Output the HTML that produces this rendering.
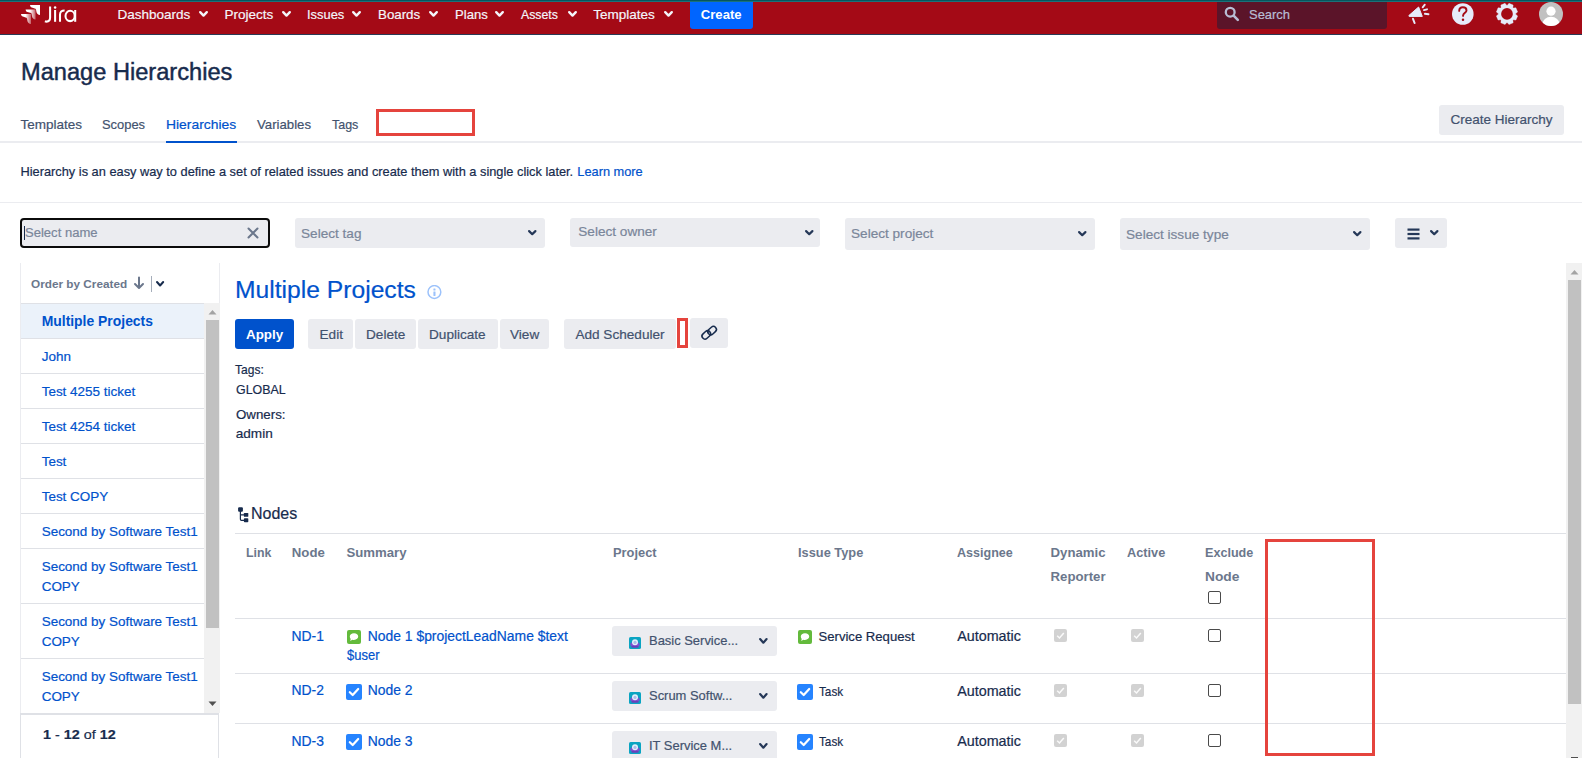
<!DOCTYPE html>
<html><head><meta charset="utf-8"><title>Manage Hierarchies</title>
<style>
html,body{margin:0;padding:0;width:1582px;height:758px;overflow:hidden;background:#fff;font-family:"Liberation Sans",sans-serif;}
.t{position:absolute;white-space:nowrap;-webkit-text-stroke:0.2px currentColor;}
.r{position:absolute;}
</style></head><body>

<div class="r" style="left:0px;top:0px;width:1582px;height:1px;background:#06565e;"></div>
<div class="r" style="left:0px;top:1px;width:1582px;height:1px;background:#1b7179;"></div>
<div class="r" style="left:0px;top:2px;width:1582px;height:32px;background:#a40a16;"></div>
<div class="r" style="left:0px;top:34px;width:1582px;height:1px;background:#2a3a55;"></div>
<svg class="r" style="left:20px;top:4px;" width="22" height="21" viewBox="0 0 22 21"><defs><linearGradient id="lg1" x1="0" y1="0" x2="1" y2="0"><stop offset="0.45" stop-color="#fff"/><stop offset="1" stop-color="#fff" stop-opacity="0.35"/></linearGradient></defs>
<path d="M0 0 H10 V10 C8.2 10 6.6 8.6 6.4 6.8 L6 4.4 C5.8 3.8 5.3 3.6 4.6 3.4 L1.8 2.6 C0.9 2.3 0 1.2 0 0 Z" transform="translate(10,1)" fill="#fff"/>
<path d="M0 0 H10 V10 C8.2 10 6.6 8.6 6.4 6.8 L6 4.4 C5.8 3.8 5.3 3.6 4.6 3.4 L1.8 2.6 C0.9 2.3 0 1.2 0 0 Z" transform="translate(5.6,5.4)" fill="url(#lg1)"/>
<path d="M0 0 H10 V10 C8.2 10 6.6 8.6 6.4 6.8 L6 4.4 C5.8 3.8 5.3 3.6 4.6 3.4 L1.8 2.6 C0.9 2.3 0 1.2 0 0 Z" transform="translate(1,10)" fill="url(#lg1)"/></svg>
<svg class="r" style="left:42px;top:4px;" width="38" height="22" viewBox="0 0 38 22"><g fill="none" stroke="#fff" stroke-width="2.05" stroke-linecap="butt"><path d="M8.1 2.6 V13.6 C8.1 16.4 6.6 17.6 4.6 17.6 C3.9 17.6 3.4 17.5 2.9 17.3"/><path d="M13.1 6 V17.8"/><path d="M18 17.8 V10.8 C18 7.9 19.6 6.4 22.6 6.4"/><path d="M33.2 6 V17.8"/><ellipse cx="28.1" cy="11.95" rx="4.6" ry="5.15"/></g><circle cx="13.1" cy="3.4" r="1.25" fill="#fff"/></svg>
<div class="t" style="left:117.40px;top:7.53px;font-size:13.5px;line-height:13.5px;color:#f4f5fa;font-weight:400;">Dashboards</div>
<svg class="r" style="left:198px;top:10px;" width="11" height="7.5" viewBox="0 0 11 7.5"><path d="M2.20 2.20 L5.50 5.60 L8.80 2.20" fill="none" stroke="#f4f5fa" stroke-width="2.4" stroke-linecap="round" stroke-linejoin="round"/></svg>
<div class="t" style="left:224.50px;top:7.53px;font-size:13.5px;line-height:13.5px;color:#f4f5fa;font-weight:400;">Projects</div>
<svg class="r" style="left:280.7px;top:10px;" width="11" height="7.5" viewBox="0 0 11 7.5"><path d="M2.20 2.20 L5.50 5.60 L8.80 2.20" fill="none" stroke="#f4f5fa" stroke-width="2.4" stroke-linecap="round" stroke-linejoin="round"/></svg>
<div class="t" style="left:307.30px;top:7.53px;font-size:13.5px;line-height:13.5px;color:#f4f5fa;font-weight:400;transform:scaleX(0.955);transform-origin:0 0;">Issues</div>
<svg class="r" style="left:350.8px;top:10px;" width="11" height="7.5" viewBox="0 0 11 7.5"><path d="M2.20 2.20 L5.50 5.60 L8.80 2.20" fill="none" stroke="#f4f5fa" stroke-width="2.4" stroke-linecap="round" stroke-linejoin="round"/></svg>
<div class="t" style="left:378.40px;top:7.53px;font-size:13.5px;line-height:13.5px;color:#f4f5fa;font-weight:400;transform:scaleX(0.986);transform-origin:0 0;">Boards</div>
<svg class="r" style="left:427.7px;top:10px;" width="11" height="7.5" viewBox="0 0 11 7.5"><path d="M2.20 2.20 L5.50 5.60 L8.80 2.20" fill="none" stroke="#f4f5fa" stroke-width="2.4" stroke-linecap="round" stroke-linejoin="round"/></svg>
<div class="t" style="left:454.50px;top:7.53px;font-size:13.5px;line-height:13.5px;color:#f4f5fa;font-weight:400;transform:scaleX(0.970);transform-origin:0 0;">Plans</div>
<svg class="r" style="left:494px;top:10px;" width="11" height="7.5" viewBox="0 0 11 7.5"><path d="M2.20 2.20 L5.50 5.60 L8.80 2.20" fill="none" stroke="#f4f5fa" stroke-width="2.4" stroke-linecap="round" stroke-linejoin="round"/></svg>
<div class="t" style="left:520.50px;top:7.53px;font-size:13.5px;line-height:13.5px;color:#f4f5fa;font-weight:400;transform:scaleX(0.910);transform-origin:0 0;">Assets</div>
<svg class="r" style="left:566.7px;top:10px;" width="11" height="7.5" viewBox="0 0 11 7.5"><path d="M2.20 2.20 L5.50 5.60 L8.80 2.20" fill="none" stroke="#f4f5fa" stroke-width="2.4" stroke-linecap="round" stroke-linejoin="round"/></svg>
<div class="t" style="left:593.30px;top:7.53px;font-size:13.5px;line-height:13.5px;color:#f4f5fa;font-weight:400;">Templates</div>
<svg class="r" style="left:662.5px;top:10px;" width="11" height="7.5" viewBox="0 0 11 7.5"><path d="M2.20 2.20 L5.50 5.60 L8.80 2.20" fill="none" stroke="#f4f5fa" stroke-width="2.4" stroke-linecap="round" stroke-linejoin="round"/></svg>
<div class="r" style="left:690px;top:2px;width:63px;height:27px;background:#0065ff;border-radius:0 0 3px 3px;"></div>
<div class="t" style="left:700.80px;top:7.87px;font-size:13.1px;line-height:13.1px;color:#ffffff;font-weight:700;-webkit-text-stroke:0;">Create</div>
<div class="r" style="left:1217px;top:2px;width:170px;height:27px;background:#5b1429;border-radius:0 0 3px 3px;"></div>
<svg class="r" style="left:1224px;top:6px;" width="16" height="16" viewBox="0 0 16 16"><circle cx="6.2" cy="6.2" r="4.4" fill="none" stroke="#b8bdd4" stroke-width="2.3"/><path d="M9.6 9.6 L13.8 13.8" stroke="#b8bdd4" stroke-width="2.6" stroke-linecap="round"/></svg>
<div class="t" style="left:1249.00px;top:8.79px;font-size:12.95px;line-height:12.95px;color:#b8bdd4;font-weight:400;">Search</div>
<svg class="r" style="left:1402px;top:0px;" width="34" height="28" viewBox="0 0 34 28"><path d="M6.8 15.6 L16.6 7 L20.3 16.4 L7.2 16.4 Z" fill="#e6ebfa" stroke="#e6ebfa" stroke-width="1" stroke-linejoin="round"/>
<path d="M11 18.8 L12.6 23" stroke="#e6ebfa" stroke-width="2" stroke-linecap="round"/>
<path d="M20.7 7.3 L22.8 4.7 M21.9 10.1 L25 9.3 M22.9 13.8 L26.5 14.2" stroke="#e6ebfa" stroke-width="1.9" stroke-linecap="round"/></svg>
<svg class="r" style="left:1451px;top:3px;" width="23" height="23" viewBox="0 0 23 23"><circle cx="11.8" cy="11" r="10.8" fill="#e6ebfa"/><path d="M8.2 7.9 C8.2 5.6 9.9 4.3 11.9 4.3 C14 4.3 15.5 5.7 15.5 7.4 C15.5 9.5 12.5 9.9 12.1 12.3 L12.1 12.9" fill="none" stroke="#a40a16" stroke-width="1.9" stroke-linecap="round"/><circle cx="12" cy="16.8" r="1.25" fill="#a40a16"/></svg>
<svg class="r" style="left:1496px;top:3px;" width="22" height="22" viewBox="0 0 22 22"><path d="M10.62 2.26 L11.38 2.26 L12.97 0.33 L17.12 2.05 L16.88 4.54 L17.41 5.07 L19.90 4.83 L21.62 8.98 L19.69 10.57 L19.69 11.33 L21.62 12.92 L19.90 17.07 L17.41 16.83 L16.88 17.36 L17.12 19.85 L12.97 21.57 L11.38 19.64 L10.62 19.64 L9.03 21.57 L4.88 19.85 L5.12 17.36 L4.59 16.83 L2.10 17.07 L0.38 12.92 L2.31 11.33 L2.31 10.57 L0.38 8.98 L2.10 4.83 L4.59 5.07 L5.12 4.54 L4.88 2.05 L9.03 0.33 Z" fill="#e6ebfa" stroke="#e6ebfa" stroke-width="0.4" stroke-linejoin="round"/><circle cx="11" cy="10.95" r="5.85" fill="#a40a16"/></svg>
<svg class="r" style="left:1539px;top:2px;" width="24" height="24" viewBox="0 0 24 24"><defs><clipPath id="av"><circle cx="12" cy="12" r="12"/></clipPath></defs><circle cx="12" cy="12" r="12" fill="#c1c1c1"/><g clip-path="url(#av)"><circle cx="12" cy="9.2" r="4.6" fill="#fff"/><ellipse cx="12" cy="22" rx="8.6" ry="7.2" fill="#fff"/></g></svg>
<div class="t" style="left:20.50px;top:60.62px;font-size:23.5px;line-height:23.5px;color:#172b4d;font-weight:400;-webkit-text-stroke:0.45px #172b4d;transform:scaleX(1.005);transform-origin:0 0;">Manage Hierarchies</div>
<div class="r" style="left:0px;top:141px;width:1582px;height:2px;background:#ebecf0;"></div>
<div class="t" style="left:20.50px;top:117.53px;font-size:13.5px;line-height:13.5px;color:#42526e;font-weight:400;">Templates</div>
<div class="t" style="left:102.00px;top:117.53px;font-size:13.5px;line-height:13.5px;color:#42526e;font-weight:400;transform:scaleX(0.956);transform-origin:0 0;">Scopes</div>
<div class="t" style="left:165.60px;top:117.53px;font-size:13.5px;line-height:13.5px;color:#0052cc;font-weight:400;transform:scaleX(1.028);transform-origin:0 0;">Hierarchies</div>
<div class="t" style="left:256.60px;top:117.53px;font-size:13.5px;line-height:13.5px;color:#42526e;font-weight:400;transform:scaleX(0.977);transform-origin:0 0;">Variables</div>
<div class="t" style="left:331.90px;top:117.53px;font-size:13.5px;line-height:13.5px;color:#42526e;font-weight:400;transform:scaleX(0.924);transform-origin:0 0;">Tags</div>
<div class="r" style="left:166px;top:141px;width:71px;height:2px;background:#0052cc;"></div>
<div class="r" style="left:376px;top:109px;width:99px;height:27px;background:transparent;border:3px solid #e5443d;box-sizing:border-box;"></div>
<div class="r" style="left:1439px;top:105px;width:125px;height:30px;background:#ebecf0;border-radius:3px;"></div>
<div class="t" style="left:1450.50px;top:113.03px;font-size:13.5px;line-height:13.5px;color:#42526e;font-weight:400;">Create Hierarchy</div>
<div class="t" style="left:20.50px;top:166.42px;font-size:12.8px;line-height:12.8px;color:#172b4d;font-weight:400;">Hierarchy is an easy way to define a set of related issues and create them with a single click later.</div>
<div class="t" style="left:577.30px;top:166.42px;font-size:12.8px;line-height:12.8px;color:#0052cc;font-weight:400;">Learn more</div>
<div class="r" style="left:0px;top:202px;width:1582px;height:1px;background:#ebecf0;"></div>
<div class="r" style="left:20px;top:218px;width:246px;height:26px;background:#ebecf0;border:2px solid #0b0b0b;border-radius:4px;"></div>
<div class="t" style="left:25.00px;top:225.80px;font-size:13.06px;line-height:13.06px;color:#7a869a;font-weight:400;">Select name</div>
<div class="r" style="left:24px;top:226px;width:1px;height:14px;background:#172b4d;"></div>
<svg class="r" style="left:247px;top:227px;" width="12" height="12" viewBox="0 0 12 12"><path d="M1.5 1.5 L10.5 10.5 M10.5 1.5 L1.5 10.5" stroke="#6b778c" stroke-width="2" stroke-linecap="round"/></svg>
<div class="r" style="left:295px;top:218px;width:250px;height:30px;background:#ebecf0;border-radius:3px;"></div>
<div class="t" style="left:301.00px;top:226.64px;font-size:13.6px;line-height:13.6px;color:#7a869a;font-weight:400;">Select tag</div>
<svg class="r" style="left:527.4px;top:229px;" width="10.5" height="7" viewBox="0 0 10.5 7"><path d="M2.10 2.10 L5.25 5.20 L8.40 2.10" fill="none" stroke="#253858" stroke-width="2.2" stroke-linecap="round" stroke-linejoin="round"/></svg>
<div class="r" style="left:570px;top:218px;width:250px;height:29px;background:#ebecf0;border-radius:3px;"></div>
<div class="t" style="left:578.30px;top:224.84px;font-size:13.6px;line-height:13.6px;color:#7a869a;font-weight:400;">Select owner</div>
<svg class="r" style="left:804px;top:228.5px;" width="10.5" height="7" viewBox="0 0 10.5 7"><path d="M2.10 2.10 L5.25 5.20 L8.40 2.10" fill="none" stroke="#253858" stroke-width="2.2" stroke-linecap="round" stroke-linejoin="round"/></svg>
<div class="r" style="left:845px;top:218px;width:250px;height:32px;background:#ebecf0;border-radius:3px;"></div>
<div class="t" style="left:851.00px;top:227.44px;font-size:13.6px;line-height:13.6px;color:#7a869a;font-weight:400;">Select project</div>
<svg class="r" style="left:1077px;top:230px;" width="10.5" height="7" viewBox="0 0 10.5 7"><path d="M2.10 2.10 L5.25 5.20 L8.40 2.10" fill="none" stroke="#253858" stroke-width="2.2" stroke-linecap="round" stroke-linejoin="round"/></svg>
<div class="r" style="left:1120px;top:218px;width:250px;height:32px;background:#ebecf0;border-radius:3px;"></div>
<div class="t" style="left:1126.00px;top:227.64px;font-size:13.6px;line-height:13.6px;color:#7a869a;font-weight:400;">Select issue type</div>
<svg class="r" style="left:1352.4px;top:229.6px;" width="10.5" height="7" viewBox="0 0 10.5 7"><path d="M2.10 2.10 L5.25 5.20 L8.40 2.10" fill="none" stroke="#253858" stroke-width="2.2" stroke-linecap="round" stroke-linejoin="round"/></svg>
<div class="r" style="left:1395px;top:218px;width:52px;height:30px;background:#ebecf0;border-radius:3px;"></div>
<svg class="r" style="left:1407px;top:228px;" width="13" height="12" viewBox="0 0 13 12"><rect x="0.5" y="0.5" width="12" height="2.2" fill="#253858"/><rect x="0.5" y="4.9" width="12" height="2.2" fill="#253858"/><rect x="0.5" y="9.3" width="12" height="2.2" fill="#253858"/></svg>
<svg class="r" style="left:1429.4px;top:229.4px;" width="10.5" height="7" viewBox="0 0 10.5 7"><path d="M2.10 2.10 L5.25 5.20 L8.40 2.10" fill="none" stroke="#253858" stroke-width="2.2" stroke-linecap="round" stroke-linejoin="round"/></svg>
<div class="r" style="left:20px;top:263px;width:1px;height:450px;background:#ebecf0;"></div>
<div class="r" style="left:219px;top:263px;width:1px;height:40px;background:#ebecf0;"></div>
<div class="t" style="left:31.00px;top:278.00px;font-size:11.77px;line-height:11.77px;color:#6b778c;font-weight:700;-webkit-text-stroke:0;">Order by Created</div>
<svg class="r" style="left:133px;top:276px;" width="12" height="14" viewBox="0 0 12 14"><path d="M6 1.5 V11.5 M2 8 L6 12 L10 8" fill="none" stroke="#6b778c" stroke-width="2" stroke-linecap="round" stroke-linejoin="round"/></svg>
<div class="r" style="left:151px;top:276px;width:1px;height:16px;background:#a5adba;"></div>
<svg class="r" style="left:154.6px;top:280.4px;" width="10.2" height="7.2" viewBox="0 0 10.2 7.2"><path d="M2.00 2.00 L5.10 5.50 L8.20 2.00" fill="none" stroke="#172b4d" stroke-width="2.0" stroke-linecap="round" stroke-linejoin="round"/></svg>
<div class="r" style="left:21px;top:303px;width:183px;height:35px;background:#ebf2fa;"></div>
<div class="r" style="left:21px;top:303px;width:183px;height:1px;background:#dfe1e6;"></div>
<div class="t" style="left:41.70px;top:315.18px;font-size:13.91px;line-height:13.91px;color:#0052cc;font-weight:700;-webkit-text-stroke:0;">Multiple Projects</div>
<div class="r" style="left:21px;top:338px;width:183px;height:1px;background:#dfe1e6;"></div>
<div class="t" style="left:41.70px;top:349.56px;font-size:13.46px;line-height:13.46px;color:#0052cc;font-weight:400;">John</div>
<div class="r" style="left:21px;top:373px;width:183px;height:1px;background:#dfe1e6;"></div>
<div class="t" style="left:41.70px;top:384.56px;font-size:13.46px;line-height:13.46px;color:#0052cc;font-weight:400;">Test 4255 ticket</div>
<div class="r" style="left:21px;top:408px;width:183px;height:1px;background:#dfe1e6;"></div>
<div class="t" style="left:41.70px;top:419.56px;font-size:13.46px;line-height:13.46px;color:#0052cc;font-weight:400;">Test 4254 ticket</div>
<div class="r" style="left:21px;top:443px;width:183px;height:1px;background:#dfe1e6;"></div>
<div class="t" style="left:41.70px;top:454.56px;font-size:13.46px;line-height:13.46px;color:#0052cc;font-weight:400;">Test</div>
<div class="r" style="left:21px;top:478px;width:183px;height:1px;background:#dfe1e6;"></div>
<div class="t" style="left:41.70px;top:489.56px;font-size:13.46px;line-height:13.46px;color:#0052cc;font-weight:400;">Test COPY</div>
<div class="r" style="left:21px;top:513px;width:183px;height:1px;background:#dfe1e6;"></div>
<div class="t" style="left:41.70px;top:524.56px;font-size:13.46px;line-height:13.46px;color:#0052cc;font-weight:400;">Second by Software Test1</div>
<div class="r" style="left:21px;top:548px;width:183px;height:1px;background:#dfe1e6;"></div>
<div class="t" style="left:41.70px;top:559.56px;font-size:13.46px;line-height:13.46px;color:#0052cc;font-weight:400;">Second by Software Test1</div>
<div class="t" style="left:41.70px;top:579.56px;font-size:13.46px;line-height:13.46px;color:#0052cc;font-weight:400;">COPY</div>
<div class="r" style="left:21px;top:603px;width:183px;height:1px;background:#dfe1e6;"></div>
<div class="t" style="left:41.70px;top:614.56px;font-size:13.46px;line-height:13.46px;color:#0052cc;font-weight:400;">Second by Software Test1</div>
<div class="t" style="left:41.70px;top:634.56px;font-size:13.46px;line-height:13.46px;color:#0052cc;font-weight:400;">COPY</div>
<div class="r" style="left:21px;top:658px;width:183px;height:1px;background:#dfe1e6;"></div>
<div class="t" style="left:41.70px;top:669.56px;font-size:13.46px;line-height:13.46px;color:#0052cc;font-weight:400;">Second by Software Test1</div>
<div class="t" style="left:41.70px;top:689.56px;font-size:13.46px;line-height:13.46px;color:#0052cc;font-weight:400;">COPY</div>
<div class="r" style="left:204px;top:303px;width:16px;height:410px;background:#f1f1f1;"></div>
<svg class="r" style="left:208px;top:309px;" width="9" height="6" viewBox="0 0 9 6"><path d="M0.5 5.5 L4.5 1 L8.5 5.5 Z" fill="#a3a3a3"/></svg>
<div class="r" style="left:206px;top:320px;width:13px;height:308px;background:#c1c1c1;"></div>
<svg class="r" style="left:208px;top:701px;" width="9" height="6" viewBox="0 0 9 6"><path d="M0.5 0.5 L4.5 5 L8.5 0.5 Z" fill="#505050"/></svg>
<div class="r" style="left:20px;top:713px;width:199px;height:45px;background:#fff;border-top:2px solid #dfe1e6;border-left:1px solid #dfe1e6;border-right:1px solid #dfe1e6;box-sizing:border-box;"></div>
<div class="t" style="left:43.00px;top:727.52px;font-size:13.5px;line-height:13.5px;color:#172b4d;font-weight:400;transform:scaleX(1.063);transform-origin:0 0;"><b>1</b> - <b>12</b> of <b>12</b></div>
<div class="t" style="left:234.60px;top:277.53px;font-size:24.32px;line-height:24.32px;color:#0052cc;font-weight:400;transform:scaleX(1.014);transform-origin:0 0;">Multiple Projects</div>
<svg class="r" style="left:427px;top:285px;" width="15" height="15" viewBox="0 0 15 15"><circle cx="7.4" cy="7" r="6.4" fill="none" stroke="#9cc2fb" stroke-width="1.5"/><rect x="6.4" y="3.6" width="2.1" height="1.9" rx="0.5" fill="#9cc2fb"/><rect x="6.4" y="6.4" width="2.1" height="4.6" rx="0.4" fill="#9cc2fb"/></svg>
<div class="r" style="left:235px;top:319px;width:59px;height:30px;background:#0052cc;border-radius:3px;"></div>
<div class="t" style="left:246.00px;top:328.02px;font-size:13.39px;line-height:13.39px;color:#ffffff;font-weight:700;-webkit-text-stroke:0;">Apply</div>
<div class="r" style="left:308px;top:319px;width:45px;height:30px;background:#ebecf0;border-radius:3px;"></div>
<div class="t" style="left:319.50px;top:328.04px;font-size:13.6px;line-height:13.6px;color:#42526e;font-weight:400;">Edit</div>
<div class="r" style="left:355px;top:319px;width:61px;height:30px;background:#ebecf0;border-radius:3px;"></div>
<div class="t" style="left:366.00px;top:328.04px;font-size:13.6px;line-height:13.6px;color:#42526e;font-weight:400;">Delete</div>
<div class="r" style="left:418px;top:319px;width:80px;height:30px;background:#ebecf0;border-radius:3px;"></div>
<div class="t" style="left:429.00px;top:328.04px;font-size:13.6px;line-height:13.6px;color:#42526e;font-weight:400;">Duplicate</div>
<div class="r" style="left:500px;top:319px;width:49px;height:30px;background:#ebecf0;border-radius:3px;"></div>
<div class="t" style="left:510.00px;top:328.04px;font-size:13.6px;line-height:13.6px;color:#42526e;font-weight:400;">View</div>
<div class="r" style="left:564px;top:319px;width:112px;height:30px;background:#ebecf0;border-radius:3px;"></div>
<div class="t" style="left:575.40px;top:328.04px;font-size:13.6px;line-height:13.6px;color:#42526e;font-weight:400;">Add Scheduler</div>
<div class="r" style="left:677px;top:318px;width:11px;height:30px;background:transparent;border:3px solid #e5443d;box-sizing:border-box;"></div>
<div class="r" style="left:690px;top:318px;width:38px;height:30px;background:#ebecf0;border-radius:3px;"></div>
<svg class="r" style="left:698px;top:322px;" width="24" height="22" viewBox="0 0 24 22"><g fill="none" stroke="#172b4d" stroke-width="1.55"><rect x="-4.7" y="-3" width="9.4" height="6" rx="3" transform="translate(14.1 8.6) rotate(-42)"/><rect x="-4.7" y="-3" width="9.4" height="6" rx="3" transform="translate(8.3 12.9) rotate(-42)"/></g></svg>
<div class="t" style="left:235.20px;top:362.84px;font-size:13.6px;line-height:13.6px;color:#172b4d;font-weight:400;transform:scaleX(0.885);transform-origin:0 0;">Tags:</div>
<div class="t" style="left:235.70px;top:382.54px;font-size:13.6px;line-height:13.6px;color:#172b4d;font-weight:400;transform:scaleX(0.913);transform-origin:0 0;">GLOBAL</div>
<div class="t" style="left:235.70px;top:407.64px;font-size:13.6px;line-height:13.6px;color:#172b4d;font-weight:400;transform:scaleX(0.978);transform-origin:0 0;">Owners:</div>
<div class="t" style="left:235.70px;top:427.34px;font-size:13.6px;line-height:13.6px;color:#172b4d;font-weight:400;">admin</div>
<svg class="r" style="left:237px;top:507px;" width="13" height="17" viewBox="0 0 13 17"><g fill="#172b4d"><rect x="1.1" y="0.3" width="4.8" height="4.5" rx="1"/><rect x="6.9" y="6" width="4.4" height="3.8" rx="0.6"/><rect x="6.9" y="11.2" width="4.4" height="4" rx="0.8"/></g><path d="M3.4 4 V12.3 Q3.4 13.3 4.4 13.3 H7.5 M3.4 7.9 H7.5" fill="none" stroke="#172b4d" stroke-width="1.2"/></svg>
<div class="t" style="left:250.80px;top:505.54px;font-size:15.6px;line-height:15.6px;color:#172b4d;font-weight:400;transform:scaleX(1.025);transform-origin:0 0;">Nodes</div>
<div class="r" style="left:235px;top:533px;width:1331px;height:1px;background:#dfe1e6;"></div>
<div class="r" style="left:235px;top:618px;width:1331px;height:1px;background:#dfe1e6;"></div>
<div class="r" style="left:235px;top:673px;width:1331px;height:1px;background:#dfe1e6;"></div>
<div class="r" style="left:235px;top:723px;width:1331px;height:1px;background:#dfe1e6;"></div>
<div class="t" style="left:245.50px;top:546.47px;font-size:13.21px;line-height:13.21px;color:#6b778c;font-weight:700;-webkit-text-stroke:0;transform:scaleX(0.937);transform-origin:0 0;">Link</div>
<div class="t" style="left:291.80px;top:546.47px;font-size:13.21px;line-height:13.21px;color:#6b778c;font-weight:700;-webkit-text-stroke:0;">Node</div>
<div class="t" style="left:346.40px;top:546.47px;font-size:13.21px;line-height:13.21px;color:#6b778c;font-weight:700;-webkit-text-stroke:0;">Summary</div>
<div class="t" style="left:612.60px;top:546.47px;font-size:13.21px;line-height:13.21px;color:#6b778c;font-weight:700;-webkit-text-stroke:0;transform:scaleX(0.973);transform-origin:0 0;">Project</div>
<div class="t" style="left:797.60px;top:546.47px;font-size:13.21px;line-height:13.21px;color:#6b778c;font-weight:700;-webkit-text-stroke:0;transform:scaleX(0.970);transform-origin:0 0;">Issue Type</div>
<div class="t" style="left:957.00px;top:546.47px;font-size:13.21px;line-height:13.21px;color:#6b778c;font-weight:700;-webkit-text-stroke:0;transform:scaleX(0.950);transform-origin:0 0;">Assignee</div>
<div class="t" style="left:1050.50px;top:546.47px;font-size:13.21px;line-height:13.21px;color:#6b778c;font-weight:700;-webkit-text-stroke:0;">Dynamic</div>
<div class="t" style="left:1127.40px;top:546.47px;font-size:13.21px;line-height:13.21px;color:#6b778c;font-weight:700;-webkit-text-stroke:0;transform:scaleX(0.965);transform-origin:0 0;">Active</div>
<div class="t" style="left:1204.60px;top:546.47px;font-size:13.21px;line-height:13.21px;color:#6b778c;font-weight:700;-webkit-text-stroke:0;transform:scaleX(0.954);transform-origin:0 0;">Exclude</div>
<div class="t" style="left:1050.50px;top:569.97px;font-size:13.21px;line-height:13.21px;color:#6b778c;font-weight:700;-webkit-text-stroke:0;">Reporter</div>
<div class="t" style="left:1204.60px;top:569.97px;font-size:13.21px;line-height:13.21px;color:#6b778c;font-weight:700;-webkit-text-stroke:0;transform:scaleX(1.042);transform-origin:0 0;">Node</div>
<div class="r" style="left:1208px;top:591px;width:13px;height:13px;background:#fff;border:1px solid #4a4a4a;border-radius:2px;box-sizing:border-box;"></div>
<div class="t" style="left:291.50px;top:629.68px;font-size:13.9px;line-height:13.9px;color:#0052cc;font-weight:400;">ND-1</div>
<svg class="r" style="left:347px;top:630px;" width="14" height="14" viewBox="0 0 14 14"><rect x="0" y="0" width="14" height="14" rx="2" fill="#63ba3c"/><path d="M7 3.3 C9.6 3.3 11.2 4.7 11.2 6.6 C11.2 8.5 9.6 9.9 7 9.9 C6.4 9.9 5.9 9.8 5.4 9.7 L3.2 11 L3.7 9 C3.1 8.4 2.8 7.5 2.8 6.6 C2.8 4.7 4.4 3.3 7 3.3 Z" fill="#fff"/></svg>
<svg class="r" style="left:798px;top:630px;" width="14" height="14" viewBox="0 0 14 14"><rect x="0" y="0" width="14" height="14" rx="2" fill="#63ba3c"/><path d="M7 3.3 C9.6 3.3 11.2 4.7 11.2 6.6 C11.2 8.5 9.6 9.9 7 9.9 C6.4 9.9 5.9 9.8 5.4 9.7 L3.2 11 L3.7 9 C3.1 8.4 2.8 7.5 2.8 6.6 C2.8 4.7 4.4 3.3 7 3.3 Z" fill="#fff"/></svg>
<div class="t" style="left:367.70px;top:629.68px;font-size:13.91px;line-height:13.91px;color:#0052cc;font-weight:400;">Node 1 $projectLeadName $text</div>
<div class="t" style="left:347.00px;top:649.18px;font-size:13.91px;line-height:13.91px;color:#0052cc;font-weight:400;transform:scaleX(0.934);transform-origin:0 0;">$user</div>
<div class="r" style="left:612px;top:626px;width:165px;height:30px;background:#ebecf0;border-radius:3px;"></div>
<svg class="r" style="left:629px;top:637px;" width="12" height="12" viewBox="0 0 12 12"><rect width="12" height="12" rx="1.6" fill="#0aa4c2"/><ellipse cx="6" cy="7.6" rx="4.6" ry="2.8" fill="#7d4fd0"/><rect x="2.6" y="9" width="6.8" height="1.6" fill="#6a3fb8"/><circle cx="6" cy="5.2" r="3" fill="#e4eefc"/><circle cx="6" cy="5.4" r="1.6" fill="#a9c0e8"/></svg>
<div class="t" style="left:649.40px;top:634.04px;font-size:13.6px;line-height:13.6px;color:#42526e;font-weight:400;transform:scaleX(0.952);transform-origin:0 0;">Basic Service...</div>
<svg class="r" style="left:758px;top:637px;" width="10.7" height="7.5" viewBox="0 0 10.7 7.5"><path d="M2.10 2.10 L5.35 5.70 L8.60 2.10" fill="none" stroke="#253858" stroke-width="2.2" stroke-linecap="round" stroke-linejoin="round"/></svg>
<div class="t" style="left:818.50px;top:630.36px;font-size:13.11px;line-height:13.11px;color:#172b4d;font-weight:400;">Service Request</div>
<div class="t" style="left:957.20px;top:629.32px;font-size:14.33px;line-height:14.33px;color:#172b4d;font-weight:400;">Automatic</div>
<svg class="r" style="left:1054px;top:629px;" width="13" height="13" viewBox="0 0 13 13"><rect x="0" y="0" width="13" height="13" rx="2" fill="#d2d2d2"/><path d="M3.2 6.8 L5.5 9 L9.8 4" fill="none" stroke="#fafafa" stroke-width="1.5"/></svg>
<svg class="r" style="left:1131px;top:629px;" width="13" height="13" viewBox="0 0 13 13"><rect x="0" y="0" width="13" height="13" rx="2" fill="#d2d2d2"/><path d="M3.2 6.8 L5.5 9 L9.8 4" fill="none" stroke="#fafafa" stroke-width="1.5"/></svg>
<div class="r" style="left:1208px;top:629px;width:13px;height:13px;background:#fff;border:1px solid #4a4a4a;border-radius:2px;box-sizing:border-box;"></div>
<div class="t" style="left:291.50px;top:684.38px;font-size:13.9px;line-height:13.9px;color:#0052cc;font-weight:400;">ND-2</div>
<svg class="r" style="left:346px;top:683.7px;" width="16" height="16" viewBox="0 0 16 16"><rect x="0" y="0" width="16" height="16" rx="2" fill="#2684ff"/><path d="M3.8 8.2 L6.7 11 L12.2 5" fill="none" stroke="#fff" stroke-width="2.2" stroke-linecap="round" stroke-linejoin="round"/></svg>
<svg class="r" style="left:797px;top:683.7px;" width="16" height="16" viewBox="0 0 16 16"><rect x="0" y="0" width="16" height="16" rx="2" fill="#2684ff"/><path d="M3.8 8.2 L6.7 11 L12.2 5" fill="none" stroke="#fff" stroke-width="2.2" stroke-linecap="round" stroke-linejoin="round"/></svg>
<div class="t" style="left:367.70px;top:684.38px;font-size:13.91px;line-height:13.91px;color:#0052cc;font-weight:400;">Node 2</div>
<div class="r" style="left:612px;top:681px;width:165px;height:30px;background:#ebecf0;border-radius:3px;"></div>
<svg class="r" style="left:629px;top:692px;" width="12" height="12" viewBox="0 0 12 12"><rect width="12" height="12" rx="1.6" fill="#0aa4c2"/><ellipse cx="6" cy="7.6" rx="4.6" ry="2.8" fill="#7d4fd0"/><rect x="2.6" y="9" width="6.8" height="1.6" fill="#6a3fb8"/><circle cx="6" cy="5.2" r="3" fill="#e4eefc"/><circle cx="6" cy="5.4" r="1.6" fill="#a9c0e8"/></svg>
<div class="t" style="left:649.40px;top:688.74px;font-size:13.6px;line-height:13.6px;color:#42526e;font-weight:400;transform:scaleX(0.952);transform-origin:0 0;">Scrum Softw...</div>
<svg class="r" style="left:758px;top:692px;" width="10.7" height="7.5" viewBox="0 0 10.7 7.5"><path d="M2.10 2.10 L5.35 5.70 L8.60 2.10" fill="none" stroke="#253858" stroke-width="2.2" stroke-linecap="round" stroke-linejoin="round"/></svg>
<div class="t" style="left:819.00px;top:684.64px;font-size:13.6px;line-height:13.6px;color:#172b4d;font-weight:400;transform:scaleX(0.862);transform-origin:0 0;">Task</div>
<div class="t" style="left:957.20px;top:684.02px;font-size:14.33px;line-height:14.33px;color:#172b4d;font-weight:400;">Automatic</div>
<svg class="r" style="left:1054px;top:684px;" width="13" height="13" viewBox="0 0 13 13"><rect x="0" y="0" width="13" height="13" rx="2" fill="#d2d2d2"/><path d="M3.2 6.8 L5.5 9 L9.8 4" fill="none" stroke="#fafafa" stroke-width="1.5"/></svg>
<svg class="r" style="left:1131px;top:684px;" width="13" height="13" viewBox="0 0 13 13"><rect x="0" y="0" width="13" height="13" rx="2" fill="#d2d2d2"/><path d="M3.2 6.8 L5.5 9 L9.8 4" fill="none" stroke="#fafafa" stroke-width="1.5"/></svg>
<div class="r" style="left:1208px;top:684px;width:13px;height:13px;background:#fff;border:1px solid #4a4a4a;border-radius:2px;box-sizing:border-box;"></div>
<div class="t" style="left:291.50px;top:734.68px;font-size:13.9px;line-height:13.9px;color:#0052cc;font-weight:400;">ND-3</div>
<svg class="r" style="left:346px;top:734.0px;" width="16" height="16" viewBox="0 0 16 16"><rect x="0" y="0" width="16" height="16" rx="2" fill="#2684ff"/><path d="M3.8 8.2 L6.7 11 L12.2 5" fill="none" stroke="#fff" stroke-width="2.2" stroke-linecap="round" stroke-linejoin="round"/></svg>
<svg class="r" style="left:797px;top:734.0px;" width="16" height="16" viewBox="0 0 16 16"><rect x="0" y="0" width="16" height="16" rx="2" fill="#2684ff"/><path d="M3.8 8.2 L6.7 11 L12.2 5" fill="none" stroke="#fff" stroke-width="2.2" stroke-linecap="round" stroke-linejoin="round"/></svg>
<div class="t" style="left:367.70px;top:734.68px;font-size:13.91px;line-height:13.91px;color:#0052cc;font-weight:400;">Node 3</div>
<div class="r" style="left:612px;top:731px;width:165px;height:30px;background:#ebecf0;border-radius:3px;"></div>
<svg class="r" style="left:629px;top:742px;" width="12" height="12" viewBox="0 0 12 12"><rect width="12" height="12" rx="1.6" fill="#0aa4c2"/><ellipse cx="6" cy="7.6" rx="4.6" ry="2.8" fill="#7d4fd0"/><rect x="2.6" y="9" width="6.8" height="1.6" fill="#6a3fb8"/><circle cx="6" cy="5.2" r="3" fill="#e4eefc"/><circle cx="6" cy="5.4" r="1.6" fill="#a9c0e8"/></svg>
<div class="t" style="left:649.40px;top:739.04px;font-size:13.6px;line-height:13.6px;color:#42526e;font-weight:400;transform:scaleX(0.952);transform-origin:0 0;">IT Service M...</div>
<svg class="r" style="left:758px;top:742px;" width="10.7" height="7.5" viewBox="0 0 10.7 7.5"><path d="M2.10 2.10 L5.35 5.70 L8.60 2.10" fill="none" stroke="#253858" stroke-width="2.2" stroke-linecap="round" stroke-linejoin="round"/></svg>
<div class="t" style="left:819.00px;top:734.94px;font-size:13.6px;line-height:13.6px;color:#172b4d;font-weight:400;transform:scaleX(0.862);transform-origin:0 0;">Task</div>
<div class="t" style="left:957.20px;top:734.32px;font-size:14.33px;line-height:14.33px;color:#172b4d;font-weight:400;">Automatic</div>
<svg class="r" style="left:1054px;top:734px;" width="13" height="13" viewBox="0 0 13 13"><rect x="0" y="0" width="13" height="13" rx="2" fill="#d2d2d2"/><path d="M3.2 6.8 L5.5 9 L9.8 4" fill="none" stroke="#fafafa" stroke-width="1.5"/></svg>
<svg class="r" style="left:1131px;top:734px;" width="13" height="13" viewBox="0 0 13 13"><rect x="0" y="0" width="13" height="13" rx="2" fill="#d2d2d2"/><path d="M3.2 6.8 L5.5 9 L9.8 4" fill="none" stroke="#fafafa" stroke-width="1.5"/></svg>
<div class="r" style="left:1208px;top:734px;width:13px;height:13px;background:#fff;border:1px solid #4a4a4a;border-radius:2px;box-sizing:border-box;"></div>
<div class="r" style="left:1265px;top:539px;width:110px;height:217px;background:transparent;border:3px solid #e5443d;box-sizing:border-box;"></div>
<div class="r" style="left:1566px;top:263px;width:16px;height:495px;background:#f1f1f1;"></div>
<svg class="r" style="left:1570px;top:269px;" width="9" height="6" viewBox="0 0 9 6"><path d="M0.5 5.5 L4.5 1 L8.5 5.5 Z" fill="#a3a3a3"/></svg>
<div class="r" style="left:1568px;top:280px;width:13px;height:424px;background:#c1c1c1;"></div>
<div class="r" style="left:1571px;top:757px;width:7px;height:1px;background:#505050;"></div>
</body></html>
